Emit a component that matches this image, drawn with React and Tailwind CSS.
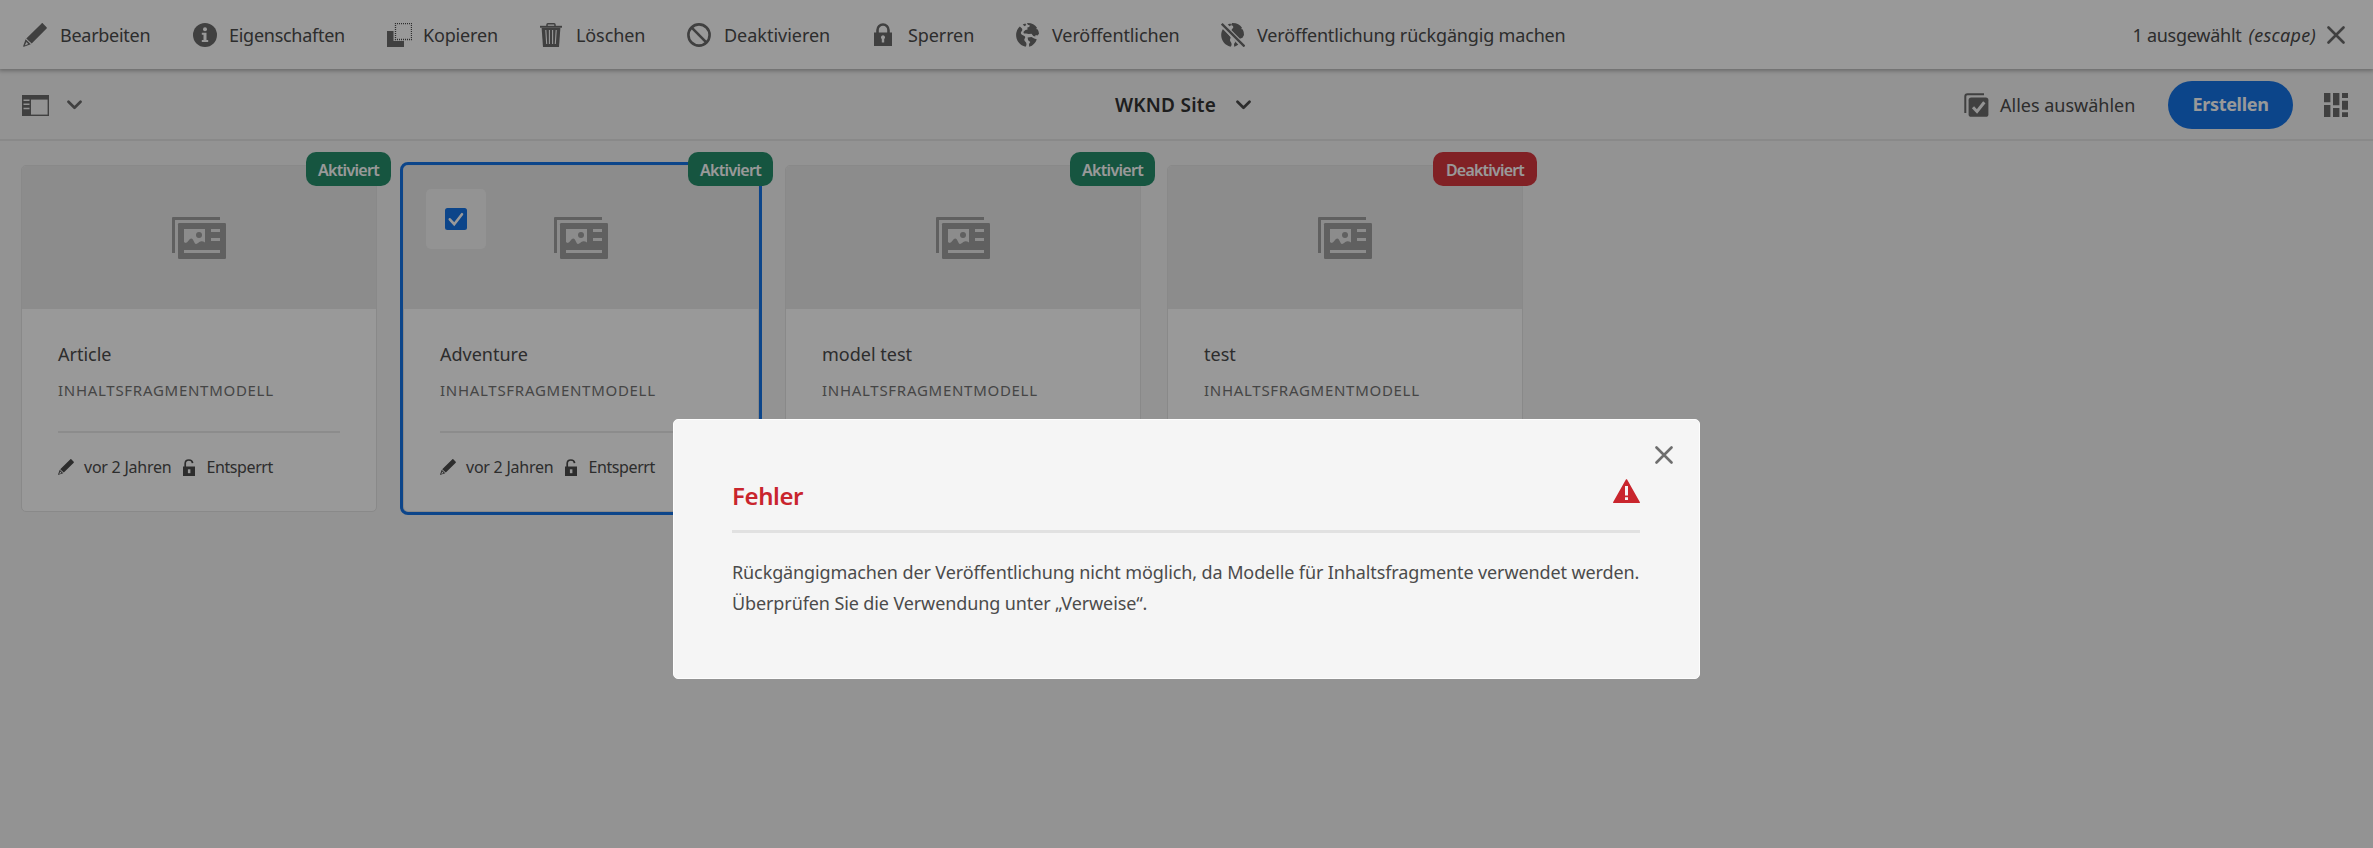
const ICON = 'shrink-0 text-[#6b6b6b]';

function Pencil({ className }) {
  return (
    <svg viewBox="0 0 24 24" className={className} fill="currentColor">
      <path d="M18.6.4c.4-.4.9-.4 1.3 0l3.700 3.900c.4.4.4.9 0 1.300L8.700 20.400 3.300 15.400zM2.600 16.300l5.200 5L.9 23.800c-.5.1-.9-.3-.7-.8zM3.400 18.900 1.800 22.500l3.400-1.400z" fillRule="evenodd" />
    </svg>
  );
}

function InfoIcon() {
  return (
    <svg viewBox="0 0 24 24" className={`${ICON} h-6 w-6`}>
      <circle cx="12" cy="12" r="12" fill="currentColor" />
      <circle cx="12" cy="6.2" r="2" fill="#fff" />
      <path d="M8.800 9.800h4.700v7.300h1.700V19H8.800v-1.900h1.700v-5.300H8.800z" fill="#fff" />
    </svg>
  );
}

function CopyIcon() {
  return (
    <svg viewBox="0 0 25 24" className={`${ICON} h-6 w-[25px]`}>
      <path d="M0 8h6.500v10H17v6H0z" fill="currentColor" />
      <rect x="8.500" y=".500" width="16" height="16" fill="none" stroke="#4b4b4b" strokeWidth="1.300" strokeDasharray="1 1" strokeDashoffset=".500" />
    </svg>
  );
}

function TrashIcon() {
  return (
    <svg viewBox="0 0 22 24" className={`${ICON} h-6 w-[22px]`} fill="none" stroke="currentColor">
      <path d="M7 3V1.700C7 1.100 7.300.8 7.900.8h6.200c.6 0 .9.300.9.900V3" strokeWidth="1.500" />
      <path d="M0 2.800h22v1.900H0z" fill="currentColor" stroke="none" />
      <path d="M1.600 4.700h18.800L19 24H3z" fill="currentColor" stroke="none" />
      <path d="M5.800 7l.9 14M9.400 7v14M12.600 7v14M16.200 7l-.9 14" stroke="#fff" strokeWidth="1.100" />
    </svg>
  );
}

function BanIcon() {
  return (
    <svg viewBox="0 0 24 24" className={`${ICON} h-6 w-6`} fill="none" stroke="currentColor" strokeWidth="2.600">
      <circle cx="12" cy="12" r="10.600" />
      <path d="M4.700 4.700l14.600 14.600" />
    </svg>
  );
}

function LockIcon() {
  return (
    <svg viewBox="0 0 18 23" className={`${ICON} h-[23px] w-[18px]`}>
      <path d="M3.500 10V7a5.500 5.500 0 0 1 11 0v3" fill="none" stroke="currentColor" strokeWidth="2.600" />
      <path d="M0 9.500h18V23H0z" fill="currentColor" />
      <path d="M9 12.300a2.100 2.100 0 0 1 1.200 3.800v3.400H7.800v-3.400A2.100 2.100 0 0 1 9 12.300z" fill="#fff" />
    </svg>
  );
}

function GlobeShape() {
  return (
    <>
      <path d="M3.800 3.600C1.500 5.700.1 8.700.1 12c0 5.700 4 10.500 9.400 11.700.9-.7 1.100-2 .9-3.200-.2-1.400-1.800-2-2.100-3.400-.2-1.200 1.100-1.800.9-3-.2-1.300-2-1.500-3.300-2.300-1-.7-1.300-1.700-.8-2.700.4-.9 1.400-1.500 1.200-2.700-.1-1.100-1.300-1.600-2.500-2.800z" />
      <path d="M6.700 1.400 9.300.4l1 1.500-1.700 1.300zM11 .1c4.400-.3 8 1.900 10 4.600l-.8 1.300 1.600.5c.6 1.200 1.100 2.700 1.200 4.300l-1.500 1.800-1.900-.6-.4 1.600-1.900-.7-1.800-2.200-2.700.4-2.700-.7-2.200.1-.5-1.600 2-1.900 2.200-.6-.3-1.800 1.800-.6.900-1.400-2.200-.8z" />
      <path d="M11.600 14.600l3.900-.7 2.700 1.500 2.500.8c-.8 3.200-3.700 6.600-7.500 7.600l-.2-2.700 1.300-2.100-2.200-1.700z" />
    </>
  );
}

function GlobeIcon() {
  return (
    <svg viewBox="0 0 24 24" className={`${ICON} h-6 w-6`} fill="currentColor">
      <GlobeShape />
    </svg>
  );
}

function GlobeOffIcon() {
  return (
    <svg viewBox="0 0 24 24" className={`${ICON} h-6 w-6`} fill="currentColor">
      <path d="M3 4.800C1.200 6.800.2 9.300.2 12c0 5.600 3.900 10.400 9.300 11.700 1-.7 1.300-2 1-3.200-.3-1.400-1.500-2.200-1.500-3.500 0-1 .8-1.800.6-3L4.500 8z" />
      <path d="M6.700 1.400 9.300.4l1 1.500-1.700 1.300zM11 .1c4.400-.3 8 1.900 10 4.600l-.8 1.300 1.600.5c.8 1.600 1.200 3.500 1.200 5.500l-1.500 2.800-3.300 1.200L10 7.500l2.300-3-.3-1.600-1.800-1z" />
      <path d="M12.800 16l3.200-.2 3.400 3.500c-1.500 2-3.600 3.700-6.200 4.500l-.2-2.700 1.300-2.100z" />
      <path d="M.8 1.300l22.500 22.500" stroke="#fff" strokeWidth="5.400" />
      <path d="M.8.800l22.700 22.700" stroke="currentColor" strokeWidth="2.300" />
    </svg>
  );
}

function Cross({ className }) {
  return (
    <svg viewBox="0 0 18 18" className={className} fill="none" stroke="currentColor" strokeWidth="2.600" strokeLinecap="round">
      <path d="M1.500 1.500l15 15M16.500 1.500l-15 15" />
    </svg>
  );
}

function Chevron({ className }) {
  return (
    <svg viewBox="0 0 15 10" className={className} fill="none" stroke="currentColor" strokeWidth="2.700" strokeLinecap="round" strokeLinejoin="round">
      <path d="M1.500 1.700l6 6 6-6" />
    </svg>
  );
}

function RailIcon() {
  return (
    <svg viewBox="0 0 27 21" className="h-[21px] w-[27px] text-[#6b6b6b]">
      <path d="M0 0h27v21H0z" fill="currentColor" />
      <path d="M9 4.600h16.600v15H9z" fill="#f5f5f5" />
      <path d="M1.500 5.200H7.500M1.500 9.300H7.500M1.500 13.500H7.500" stroke="#f5f5f5" strokeWidth="1.400" />
    </svg>
  );
}

function SelectAllIcon() {
  return (
    <svg viewBox="0 0 25 24" className="h-6 w-[25px] text-[#6b6b6b]" fill="none">
      <path d="M1.300 20V3.500c0-1.400.8-2.200 2.200-2.200H20" stroke="currentColor" strokeWidth="2" />
      <rect x="4.600" y="4.600" width="19.800" height="19.200" rx="2.600" fill="currentColor" />
      <path d="M9 14.300l4 4.200 7.300-9.300" stroke="#f5f5f5" strokeWidth="3" />
    </svg>
  );
}

function ViewIcon() {
  return (
    <svg viewBox="0 0 24 24" className="h-6 w-6 text-[#6b6b6b]" fill="currentColor">
      <path d="M0 0h6.400v9.300H0zM0 12h6.400v12H0zM9 0h6.400v12.300H9zM9 15h6.400v9H9zM18 0h6v5h-6zM18 7.700h6v9h-6zM18 19.300h6V24h-6z" />
    </svg>
  );
}

function ModelIcon() {
  return (
    <svg viewBox="0 0 54 42" className="h-[42px] w-[54px] text-[#a0a0a0]">
      <path d="M0 36V1.200C0 .5.500 0 1.200 0H48v3H3v33z" fill="currentColor" />
      <rect x="6" y="6" width="48" height="36" rx="1.200" fill="currentColor" />
      <path d="M12 12h21v13.400c-2-1.400-4-1.700-5.800-.4-1 .9-2.200 1.900-3.200 1.900-1.700 0-2.600-5.500-4.700-5.500-2 0-3.300 3.900-5.300 4.400-.9.300-1.500-.2-2-.8z" fill="#eaeaea" />
      <circle cx="27" cy="18" r="3" fill="currentColor" />
      <path d="M39 12h9v3h-9zM39 21h9v3h-9zM12 33h36v3H12z" fill="#eaeaea" />
    </svg>
  );
}

function UnlockIcon() {
  return (
    <svg viewBox="0 0 12 17" className="h-[17px] w-3 text-[#4b4b4b]">
      <path d="M2.200 8V4.500C2.200 2.500 3.700 1 5.900 1c2 0 3.500 1.200 3.700 3.200" fill="none" stroke="currentColor" strokeWidth="1.700" />
      <path d="M0 7.500h12V17H0z" fill="currentColor" />
      <path d="M4.900 10.300h2.500v3.900H4.900z" fill="#fff" />
    </svg>
  );
}

function AlertIcon() {
  return (
    <svg viewBox="0 0 27 24" className="h-6 w-[27px]">
      <path d="M12.900.6c.3-.6.900-.6 1.200 0L26.800 23c.3.600.1 1-.6 1H.8c-.7 0-.9-.4-.6-1z" fill="#c9252d" />
      <path d="M12 7h3v9.500h-3zM12 18.200h3V21h-3z" fill="#f5f5f5" />
    </svg>
  );
}

const ACTIONS = [
  { label: 'Bearbeiten', icon: <Pencil className={`${ICON} h-6 w-6`} />, item: 'w-[170px]', slot: 'w-[37px]', track: 'tracking-[-0.27px]' },
  { label: 'Eigenschaften', icon: <InfoIcon />, item: 'w-[194px]', slot: 'w-9', track: 'tracking-[-0.27px]' },
  { label: 'Kopieren', icon: <CopyIcon />, item: 'w-[153px]', slot: 'w-9', track: 'tracking-[-0.16px]' },
  { label: 'Löschen', icon: <TrashIcon />, item: 'w-[147px]', slot: 'w-9', track: 'tracking-[-0.1px]' },
  { label: 'Deaktivieren', icon: <BanIcon />, item: 'w-[187px]', slot: 'w-[37px]', track: 'tracking-[-0.02px]' },
  { label: 'Sperren', icon: <LockIcon />, item: 'w-[142px]', slot: 'w-[34px]', track: 'tracking-[-0.1px]' },
  { label: 'Veröffentlichen', icon: <GlobeIcon />, item: 'w-[205px]', slot: 'w-9', track: 'tracking-[-0.1px]' },
  { label: 'Veröffentlichung rückgängig machen', icon: <GlobeOffIcon />, item: 'w-[360px]', slot: 'w-9', track: 'tracking-[-0.17px]' },
];

const CARDS = [
  { title: 'Article', status: 'Aktiviert' },
  { title: 'Adventure', status: 'Aktiviert', selected: true },
  { title: 'model test', status: 'Aktiviert' },
  { title: 'test', status: 'Deaktiviert' },
];

function ActionBar() {
  return (
    <header className="relative flex h-[69px] items-center justify-between bg-white pl-[23px] pr-7 shadow-[0_1px_4px_1px_rgba(0,0,0,0.28)]">
      <div className="flex">
        {ACTIONS.map((a) => (
          <div key={a.label} className={`flex items-center ${a.item}`}>
            <span className={`flex shrink-0 ${a.slot}`}>{a.icon}</span>
            <span className={a.track}>{a.label}</span>
          </div>
        ))}
      </div>
      <div className="flex items-center">
        <span className="tracking-[-0.25px]">1 ausgewählt</span>
        <span className="ml-[7px] italic tracking-[0.3px]">(escape)</span>
        <Cross className="ml-[11px] h-[18px] w-[18px] text-[#6b6b6b]" />
      </div>
    </header>
  );
}

function NavBar() {
  return (
    <nav className="grid h-[72px] grid-cols-[1fr_auto_1fr] items-center border-b-2 border-[#e4e4e4] pl-[22px] pr-[25px] pt-[2px]">
      <div className="flex items-center gap-[18px]">
        <RailIcon />
        <Chevron className="h-[10px] w-[15px] text-[#6b6b6b]" />
      </div>
      <div className="flex items-center gap-5 pr-[4px]">
        <span className="text-[19px] font-semibold tracking-[0.25px] text-[#323232]">WKND Site</span>
        <Chevron className="h-[10px] w-[15px] text-[#4b4b4b]" />
      </div>
      <div className="flex items-center justify-end">
        <SelectAllIcon />
        <span className="ml-[11px] w-[168px]">Alles auswählen</span>
        <button className="h-12 w-[125px] rounded-full bg-[#1473e6] pb-[2px] font-bold tracking-[-0.3px] text-white">Erstellen</button>
        <span className="ml-[31px]">
          <ViewIcon />
        </span>
      </div>
    </nav>
  );
}

function Card({ title, status, selected }) {
  return (
    <article
      className={
        selected
          ? 'relative h-[347px] w-[356px] rounded-[5px] border border-[#e4e4e4] bg-white outline-3 outline-[#1473e6]'
          : 'relative h-[347px] w-[356px] rounded-[5px] border border-[#e4e4e4] bg-white'
      }
    >
      <div className="flex h-[143px] items-start justify-center rounded-t-[4px] bg-[#eaeaea] pt-[51px]">
        <ModelIcon />
      </div>
      {selected && (
        <div className="absolute left-[22px] top-[23px] flex h-[60px] w-[60px] items-center justify-center rounded-[5px] bg-[#f5f5f5]">
          <svg viewBox="0 0 22 22" className="h-[22px] w-[22px]">
            <rect width="22" height="22" rx="2.500" fill="#1473e6" />
            <path d="M4.800 11.300l4.400 4.900 7.800-10" fill="none" stroke="#fff" strokeWidth="2.600" strokeLinecap="round" />
          </svg>
        </div>
      )}
      <span
        className={
          status === 'Aktiviert'
            ? 'absolute -right-[15px] -top-[14px] flex h-[34px] w-[85px] items-center justify-center rounded-[10px] bg-[#268e6c] pt-px text-base font-semibold tracking-[-0.7px] text-white'
            : 'absolute -right-[15px] -top-[14px] flex h-[34px] w-[104px] items-center justify-center rounded-[10px] bg-[#d7373f] pt-px text-base font-semibold tracking-[-0.8px] text-white'
        }
      >
        {status}
      </span>
      <div className="px-9 pt-[31px]">
        <h2 className="leading-7 text-[#4b4b4b]">{title}</h2>
        <p className="mt-[10px] text-[15px] leading-6 tracking-[0.72px] text-[#747474]">INHALTSFRAGMENTMODELL</p>
        <div className="mt-[29px] flex h-[70px] items-center border-t-2 border-[#eaeaea] text-base text-[#4b4b4b]">
          <Pencil className="h-4 w-4 text-[#4b4b4b]" />
          <span className="ml-[10px] tracking-[-0.24px]">vor 2 Jahren</span>
          <span className="ml-[12px]">
            <UnlockIcon />
          </span>
          <span className="ml-[11px] tracking-[-0.4px]">Entsperrt</span>
        </div>
      </div>
    </article>
  );
}

function ErrorDialog() {
  return (
    <section role="dialog" className="relative mt-[419px] h-[260px] w-[1027px] rounded-[5px] border border-[#fdfdfd] bg-[#f5f5f5] pl-[58px] pr-[59px] pt-[59px]">
      <Cross className="absolute right-[26px] top-[26px] h-[18px] w-[18px] text-[#6e6e6e]" />
      <div className="flex h-[54px] items-start justify-between border-b-3 border-[#e1e1e1]">
        <h1 className="pt-px text-2xl font-semibold leading-8 tracking-[-0.4px] text-[#c9252d]">Fehler</h1>
        <AlertIcon />
      </div>
      <p className="mt-[24px] whitespace-nowrap leading-[31px] tracking-[-0.11px] text-[#4b4b4b]">
        Rückgängigmachen der Veröffentlichung nicht möglich, da Modelle für Inhaltsfragmente verwendet werden.
        <br />
        Überprüfen Sie die Verwendung unter „Verweise“.
      </p>
    </section>
  );
}

export default function App() {
  return (
    <div className="relative h-[848px] w-[2373px] overflow-hidden bg-[#f5f5f5] font-['Noto_Sans',sans-serif] text-[18px] leading-7 text-[#4b4b4b]">
      <ActionBar />
      <NavBar />
      <main className="flex gap-[26px] pl-[21px] pt-6">
        {CARDS.map((c) => (
          <Card key={c.title} {...c} />
        ))}
      </main>
      <div className="absolute inset-0 flex items-start justify-center bg-black/40">
        <ErrorDialog />
      </div>
    </div>
  );
}
